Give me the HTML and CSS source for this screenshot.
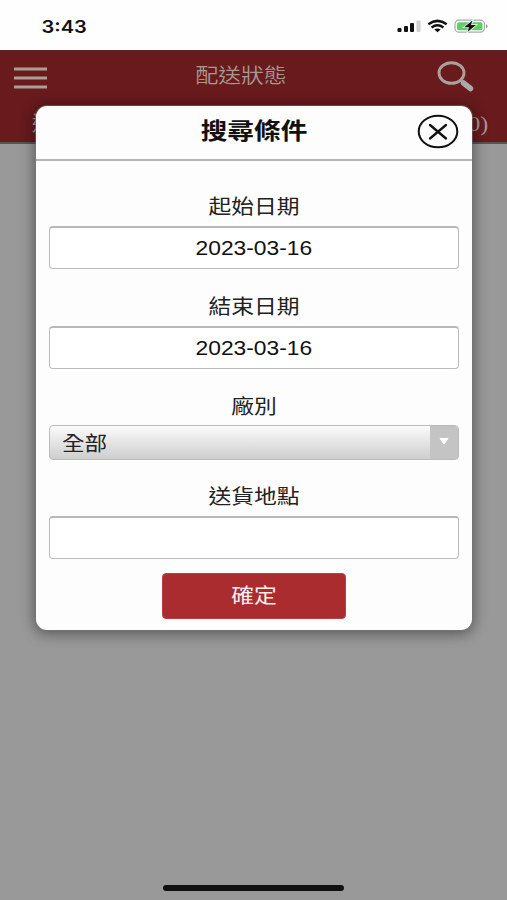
FILE: index.html
```html
<!DOCTYPE html>
<html lang="zh-Hant">
<head>
<meta charset="utf-8">
<title>配送狀態</title>
<link rel="stylesheet" href="styles.css">
</head>
<body>
<div class="phone">
  <div class="status">
    <span class="time"><span class="wide">3:43</span></span>
    <svg class="signals" width="92" height="16" viewBox="0 0 92 16">
      <g fill="#111"><rect x="1.500" y="9" width="4" height="4" rx="1"/><rect x="8" y="7" width="4" height="6" rx="1"/><rect x="14" y="4" width="4" height="9" rx="1"/></g>
      <rect x="20.500" y="1.500" width="4" height="11.500" rx="1" fill="#d0d0d0"/>
      <g fill="none" stroke="#111" stroke-width="2.500"><path d="M32.300 5.200Q41.500-1.500 50.700 5.200"/><path d="M35.600 8.400Q41.500 4.200 47.400 8.400"/></g>
      <path d="M38.300 10.500Q41.500 8.300 44.700 10.500L41.500 13.200Z" fill="#111"/>
      <rect x="59" y="1.200" width="29.500" height="12" rx="4" fill="#fff" stroke="#aaa" stroke-width="1.200"/>
      <rect x="61" y="3.200" width="25.500" height="8" rx="2" fill="#5ece67"/>
      <path d="M90 5Q93 7 90 9.500Z" fill="#999"/>
      <path d="M76.500 1.500L68 8.300H73L71.500 13L80 6H75Z" fill="#111" stroke="#fff" stroke-width="1.500" paint-order="stroke"/>
    </svg>
  </div>
  <header class="header">
    <div class="toolbar">
      <svg class="menu" width="33" height="22" viewBox="0 0 33 22"><path d="M0 2H33M0 11H33M0 20H33" stroke="#a8a094" stroke-width="3.200"/></svg>
      <h1 class="heading"><span class="wide">配送狀態</span></h1>
      <svg class="search" width="38" height="32" viewBox="0 0 38 32"><ellipse cx="14.500" cy="12" rx="12.500" ry="10.300" fill="none" stroke="#aaa197" stroke-width="2.900"/><path d="M22.500 18.500L26 21.500" stroke="#aaa197" stroke-width="2"/><path d="M26.500 22L33.500 27.500" stroke="#aaa" stroke-width="5.500" stroke-linecap="round"/></svg>
    </div>
    <div class="tabs"><span>送</span><span class="count">(0)</span></div>
  </header>
  <main class="page"><div class="home"></div></main>
  <section class="modal">
    <div class="modal-head">
      <h2><span class="wide">搜尋條件</span></h2>
      <svg class="close" width="42" height="35" viewBox="0 0 42 35" fill="none" stroke="#111"><ellipse cx="21" cy="17.500" rx="19.300" ry="15.800" stroke-width="2"/><path d="M13 11L29 24.500M29 11L13 24.500" stroke-width="2.300" stroke-linecap="round"/></svg>
    </div>
    <form class="form">
      <div class="label"><span class="wide">起始日期</span></div>
      <div class="input"><span class="date">2023-03-16</span></div>
      <div class="label"><span class="wide">結束日期</span></div>
      <div class="input"><span class="date">2023-03-16</span></div>
      <div class="label"><span class="wide">廠別</span></div>
      <div class="select"><span class="choice">全部</span><span class="arrow"><svg width="10" height="7" viewBox="0 0 10 7"><path d="M1 .5H9L5 6Z" fill="#fff" stroke="#fff"/></svg></span></div>
      <div class="label"><span class="wide">送貨地點</span></div>
      <div class="input"></div>
      <div class="submit"><span class="wide">確定</span></div>
    </form>
  </section>
</div>
</body>
</html>
```
FILE: styles.css
```css
* { box-sizing: border-box; }
body {
  margin: 0;
  font: 20px/24px "Liberation Sans", "Noto Sans CJK TC", sans-serif;
  color: #222;
}
.phone {
  position: relative;
  display: flex;
  flex-direction: column;
  height: 900px;
  overflow: hidden;
}
.wide { display: inline-block; transform: scaleX(1.14); }
.status {
  height: 50px;
  padding: 0 19px 0 46px;
  display: flex;
  justify-content: space-between;
  align-items: center;
  background: #fefefe;
}
.time { font-family: Inter, sans-serif; font-size: 17px; font-weight: 600; padding-top: 3px; color: #111; }
.time .wide { transform: translateX(-1px) scaleX(1.18); }
.signals { margin-top: 3px; }
.header {
  height: 94px;
  background: #681a1d;
  border-top: 1px solid #5c2427;
  border-bottom: 2px solid #555;
}
.toolbar { height: 52px; padding: 0 32px 0 14px; display: flex; justify-content: space-between; align-items: center; }
.menu { margin-top: 1px; }
.heading { margin: -2px 3px 0 0; font-size: 20px; font-weight: 350; color: #a99791; }
.search { margin-top: -1px; }
.tabs {
  display: flex;
  justify-content: space-between;
  padding: 9px 19px 0 32px;
  font-family: "Liberation Serif", "Noto Sans CJK TC", serif;
  color: #a99791;
}
.count { transform: scaleX(1.2); transform-origin: 100% 0; }
.page { flex: 1; background: #999; display: flex; justify-content: center; align-items: flex-end; }
.home { width: 181px; height: 6px; margin: 0 0 9px; border-radius: 3px; background: #111; }
.modal {
  position: absolute;
  left: 36px;
  top: 106px;
  width: 436px;
  height: 524px;
  border-radius: 11px;
  background: #fdfdfd;
  box-shadow: 0 0 1px 1px rgba(120,120,120,.55), 0 2px 14px 2px rgba(0,0,0,.42);
}
.modal-head {
  height: 55px;
  padding: 0 13px 3px 164px;
  display: flex;
  justify-content: space-between;
  align-items: center;
  border-bottom: 2px solid #b5b5b5;
}
.modal-head h2 { margin: 0; padding-left: 7.5px; font-size: 23px; font-weight: 700; color: #111; }
.modal-head .wide { transform: scaleX(1.16); }
.form { padding: 0 13px; }
.label { text-align: center; height: 24px; margin: 26px 0 7px; }
.label:first-child { margin-top: 34px; }
.input {
  height: 43px;
  border: 1px solid #bbb;
  border-top: 2px solid #b8b8b8;
  border-radius: 4px;
  background: #fff;
  display: flex;
  justify-content: center;
  align-items: center;
}
.date { font-size: 19.5px; transform: scaleX(1.17); padding-bottom: 1px; color: #111; }
.select {
  height: 35px;
  margin-top: -1px;
  border: 1px solid #bbb;
  border-radius: 4px;
  background: linear-gradient(#fbfbfb, #cecece);
  display: flex;
  justify-content: space-between;
  align-items: stretch;
}
.select + .label { margin-top: 25px; }
.choice { padding: 6px 0 0 12px; transform: scaleX(1.13); transform-origin: 12px 0; }
.arrow { width: 28px; background: #c4c4c4; border-radius: 0 3px 3px 0; display: flex; align-items: center; justify-content: center; padding-bottom: 2px; }
.submit {
  width: 184px;
  height: 46px;
  margin: 14px auto 0;
  border: 1px solid #b84246;
  border-radius: 4px;
  background: #ab2c2f;
  color: #f8eeee;
  display: flex;
  align-items: center;
  justify-content: center;
}
```
